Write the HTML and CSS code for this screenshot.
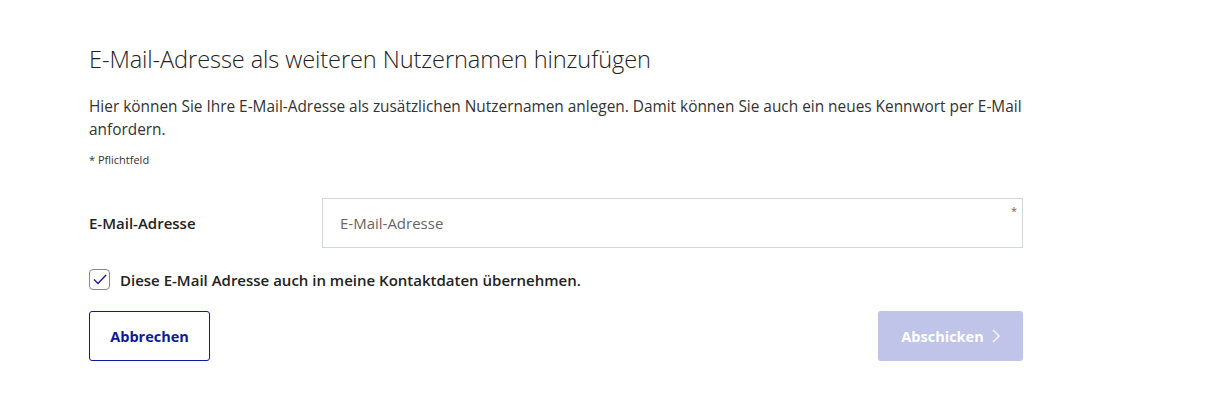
FILE: index.html
```html
<!DOCTYPE html>
<html>
<head>
<meta charset="UTF-8">
<title>E-Mail-Adresse hinzufügen</title>
<link rel="stylesheet" href="styles.css">
</head>
<body>
<div class="page">
	<h1 class="title">E-Mail-Adresse als weiteren Nutzernamen hinzufügen</h1>
	<p class="intro">Hier können Sie Ihre E-Mail-Adresse als zusätzlichen Nutzernamen anlegen. Damit können Sie auch ein neues Kennwort per E-Mail anfordern.</p>
	<p class="hint">* Pflichtfeld</p>

	<div class="row">
		<label class="label" for="mail">E-Mail-Adresse</label>
		<div class="field">
			<input id="mail" class="input" type="text" placeholder="E-Mail-Adresse">
			<span class="req">*</span>
		</div>
	</div>

	<label class="check">
		<span class="box">
			<svg width="14" height="11" viewBox="0 0 14 11"><path d="M1 5.5 L5 9.5 L13 1" fill="none" stroke="#1a1aa8" stroke-width="1.4"/></svg>
		</span>
		<span class="check-text">Diese E-Mail Adresse auch in meine Kontaktdaten übernehmen.</span>
	</label>

	<div class="actions">
		<button class="btn btn-outline">Abbrechen</button>
		<button class="btn btn-primary">Abschicken
			<svg width="8" height="14" viewBox="0 0 8 14"><path d="M1 1 L7 7 L1 13" fill="none" stroke="#fff" stroke-width="1.3"/></svg>
		</button>
	</div>
</div>
</body>
</html>
```

FILE: styles.css
```css
html,body{margin:0;padding:0;background:#fff;}
body{font-family:"Open Sans","Noto Sans",sans-serif;color:#262626;}
p,h1{margin:0;}

.page{
	width:934px;
	padding:41px 0 0 89px;
}
.title{
	font-size:23.6px;
	font-weight:300;
	line-height:36px;
	color:#222;
	letter-spacing:-0.1px;
}
.intro{
	margin-top:18px;
	font-size:15.4px;
	line-height:23px;
	color:#333;
}
.hint{
	margin-top:11px;
	font-size:11px;
	line-height:16px;
	color:#333;
}

.row{
	display:flex;
	align-items:center;
	margin-top:30px;
}
.label{
	width:233px;
	font-size:15px;
	font-weight:600;
	color:#222;
}
.field{
	position:relative;
	flex:1;
}
.input{
	display:block;
	width:100%;
	height:50px;
	box-sizing:border-box;
	border:1px solid #d4d7da;
	padding:0 17px;
	font:15px "Open Sans","Noto Sans",sans-serif;
	color:#333;
	outline:none;
}
.input::placeholder{color:#666;}
.req{
	position:absolute;
	right:6px;
	top:5px;
	font-size:11px;
	color:#8a5a3a;
}

.check{
	display:flex;
	align-items:center;
	margin-top:21px;
}
.box{
	width:19px;
	height:19px;
	border:1px solid #888;
	border-radius:4px;
	display:flex;
	align-items:center;
	justify-content:center;
	margin-right:10px;
}
.check-text{
	font-size:15px;
	font-weight:600;
	color:#222;
}

.actions{
	display:flex;
	justify-content:space-between;
	margin-top:21px;
}
.btn{
	height:50px;
	border-radius:3px;
	font:700 14.5px "Open Sans","Noto Sans",sans-serif;
	display:flex;
	align-items:center;
	gap:8px;
}
.btn-outline{
	width:121px;
	justify-content:center;
	background:#fff;
	border:1px solid #0b1b96;
	color:#0b1b96;
}
.btn-primary{
	width:145px;
	justify-content:center;
	background:#bfc4e8;
	border:0;
	color:#fff;
}
```
